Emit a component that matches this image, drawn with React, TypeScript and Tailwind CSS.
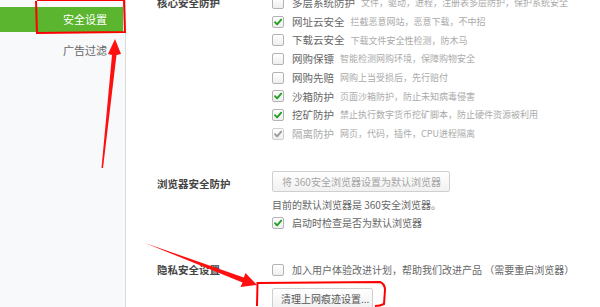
import React from "react";

const FONT = { fontFamily: '"Noto Sans CJK SC", "Noto Sans", sans-serif' };

function Box({ checked, disabled }: { checked?: boolean; disabled?: boolean }) {
  return (
    <span
      className={`flex h-[12px] w-[12px] shrink-0 items-center justify-center rounded-[2px] border bg-gradient-to-b from-white to-[#eeeeee] ${
        disabled ? "border-[#cfcfcf]" : "border-[#b3b3b3]"
      }`}
    >
      {checked && (
        <svg width="10" height="10" viewBox="0 0 10 10">
          <path
            d="M2 5.2 L4.1 7.3 L8.2 2.6"
            fill="none"
            stroke={disabled ? "#9a9a9a" : "#22a022"}
            strokeWidth="1.9"
            strokeLinecap="round"
            strokeLinejoin="round"
          />
        </svg>
      )}
    </span>
  );
}

const rows: [string, string, boolean, boolean?][] = [
  ["多层系统防护", "文件，驱动，进程，注册表多层防护，保护系统安全", false],
  ["网址云安全", "拦截恶意网站，恶意下载，不中招", true],
  ["下载云安全", "下载文件安全性检测，防木马", false],
  ["网购保镖", "智能检测网购环境，保障购物安全", false],
  ["网购先赔", "网购上当受损后，先行赔付", false],
  ["沙箱防护", "页面沙箱防护，防止未知病毒侵害", true],
  ["挖矿防护", "禁止执行数字货币挖矿脚本，防止硬件资源被利用", true],
  ["隔离防护", "网页，代码，插件，CPU进程隔离", true, true],
];

export default function App() {
  return (
    <div className="relative flex h-[307px] w-[600px] overflow-hidden bg-white" style={FONT}>
      {/* Sidebar */}
      <div className="flex h-full w-[126px] shrink-0 flex-col border-r border-[#dcdcdc] bg-[#f7f9fb] pt-[7px]">
        <div className="flex h-[25px] w-[123px] items-center bg-[#5bb52e] pl-[63px] text-[11px] text-white">
          安全设置
        </div>
        <div className="flex h-[37px] items-center pl-[63px] text-[11px] text-[#666]">广告过滤</div>
      </div>

      {/* Main */}
      <div className="flex flex-1 flex-col pl-[31px]">
        <div className="mt-[-6.4px] flex">
          <div className="w-[115px] text-[10.5px] font-bold leading-[18.7px] text-[#444]">核心安全防护</div>
          <div className="flex flex-col">
            {rows.map(([t, d, c, dis]) => (
              <div key={t} className="flex h-[18.7px] items-center">
                <Box checked={c} disabled={dis} />
                <span className={`ml-[8px] text-[10.5px] ${dis ? "text-[#aaa]" : "text-[#666]"}`}>{t}</span>
                <span className="ml-[6px] text-[9px] text-[#aaa]">{d}</span>
              </div>
            ))}
          </div>
        </div>

        <div className="mt-[27.7px] flex">
          <div className="w-[115px] pt-[4px] text-[10.5px] font-bold leading-[18px] text-[#444]">浏览器安全防护</div>
          <div className="flex flex-col">
            <div className="flex h-[21px] w-[178px] items-center rounded-[2px] border border-[#cfcfcf] bg-gradient-to-b from-white to-[#f1f1f1] pl-[9px] text-[10px] text-[#a5a5a5]">
              将 360安全浏览器设置为默认浏览器
            </div>
            <div className="mt-[4px] flex h-[18px] items-center text-[10px] text-[#666]">
              目前的默认浏览器是 360安全浏览器。
            </div>
            <div className="flex h-[18px] items-center">
              <Box checked />
              <span className="ml-[8px] text-[10px] text-[#666]">启动时检查是否为默认浏览器</span>
            </div>
          </div>
        </div>

        <div className="mt-[29px] flex">
          <div className="w-[115px] text-[10.5px] font-bold leading-[18px] text-[#444]">隐私安全设置</div>
          <div className="flex flex-col">
            <div className="flex h-[18px] items-center">
              <Box />
              <span className="ml-[8px] text-[10px] text-[#666]">
                加入用户体验改进计划，帮助我们改进产品 （需要重启浏览器）
              </span>
            </div>
            <div className="mt-[9px] flex h-[21px] w-[101px] items-center rounded-[2px] border border-[#cfcfcf] bg-gradient-to-b from-white to-[#f1f1f1] pl-[8px] text-[10px] text-[#555]">
              清理上网痕迹设置...
            </div>
          </div>
        </div>
      </div>

      {/* Annotations */}
      <svg className="pointer-events-none absolute left-0 top-0" width="600" height="307" viewBox="0 0 600 307">
        <path
          d="M37 0 L124 0 M36 1 L37 33 L124 32 M124 0 L125 33"
          fill="none"
          stroke="#ff0000"
          strokeWidth="2"
        />
        <polygon points="101.5,168 112,55 108,54 115,39 121,54 116.5,55 103,168" fill="#ff1010" />
        <polygon points="145,243 242.5,282.5 240.5,287 257,285 245.5,273 243.8,277.5" fill="#ff1010" />
        <path
          d="M257 306 L257.5 283 L380 282 Q385 284 385 290 L384 304 Q380 306 375 306"
          fill="none"
          stroke="#ff0000"
          strokeWidth="2"
        />
      </svg>
    </div>
  );
}
